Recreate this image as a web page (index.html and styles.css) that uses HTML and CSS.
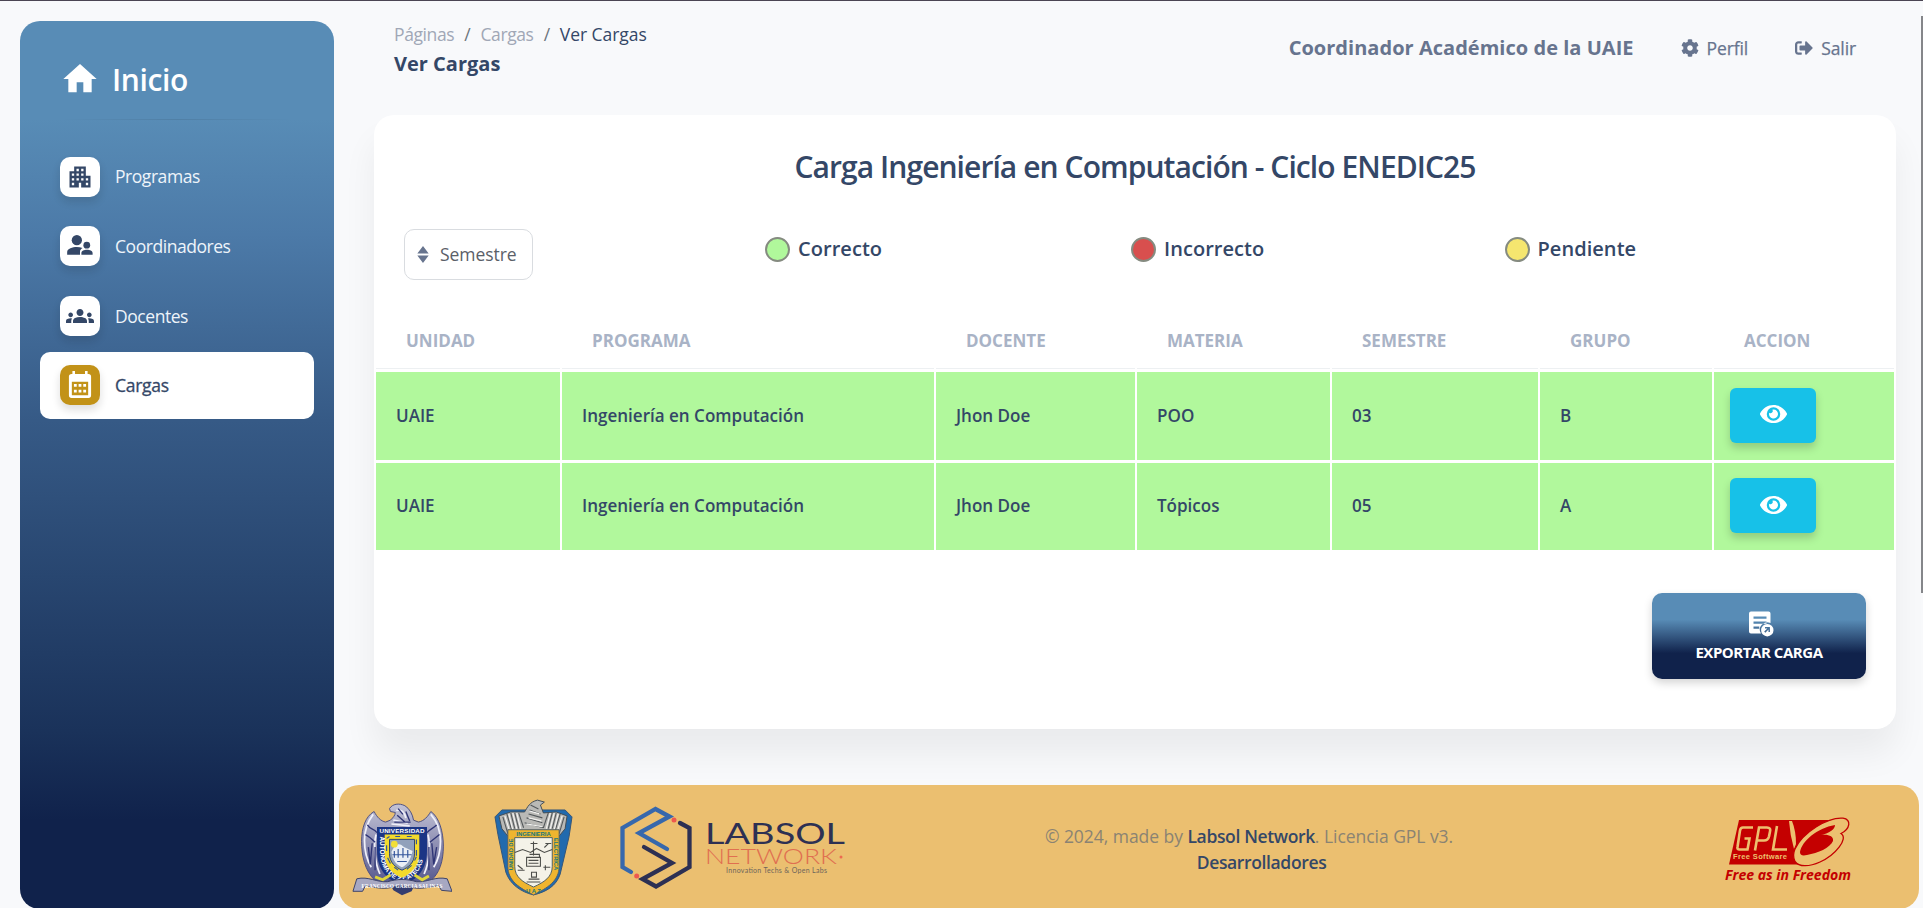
FILE: index.html
```html
<!DOCTYPE html>
<html lang="es">
<head>
<meta charset="utf-8">
<title>Ver Cargas</title>
<link rel="stylesheet" href="styles.css">
</head>
<body>
<div class="app">
  <aside class="sidebar">
    <a class="brand">
      <svg class="brand-icon" viewBox="0 0 24 24"><path d="M10 20v-6h4v6h5v-8h3L12 3 2 12h3v8z"/></svg>
      <span>Inicio</span>
    </a>
    <hr class="divider">
    <nav class="menu">
      <a class="item"><span class="tile"><svg viewBox="0 0 24 24"><path d="M17 11V3H7v4H3v14h8v-4h2v4h8V11h-4zM7 19H5v-2h2v2zm0-4H5v-2h2v2zm0-4H5V9h2v2zm4 4H9v-2h2v2zm0-4H9V9h2v2zm0-4H9V5h2v2zm4 8h-2v-2h2v2zm0-4h-2V9h2v2zm0-4h-2V5h2v2zm4 12h-2v-2h2v2zm0-4h-2v-2h2v2z"/></svg></span>Programas</a>
      <a class="item"><span class="tile"><svg viewBox="0 0 24 24"><circle cx="9.300" cy="7" r="4.400"/><circle cx="17.800" cy="11.300" r="2.900"/><path d="M1 19.500v-2.300c0-2.900 4.700-4.300 8.200-4.300 1.800 0 3.500.3 5 .9-1.500.8-2.200 1.900-2.200 3.100v2.600zM13.200 19.500v-1.400c0-2 2.400-2.800 4.800-2.800s4.800.8 4.800 2.800v1.400z"/></svg></span>Coordinadores</a>
      <a class="item"><span class="tile"><svg viewBox="0 0 24 24"><path d="M12 12.750c1.630 0 3.070.39 4.240.9 1.080.48 1.760 1.560 1.760 2.730V18H6v-1.610c0-1.180.68-2.260 1.760-2.730 1.170-.52 2.610-.91 4.240-.91zM4 13c1.100 0 2-.9 2-2s-.9-2-2-2-2 .9-2 2 .9 2 2 2zm1.130 1.100C4.760 14.040 4.390 14 4 14c-.99 0-1.930.21-2.780.58C.48 14.900 0 15.620 0 16.430V18h4.500v-1.610c0-.83.23-1.610.63-2.290zM20 13c1.100 0 2-.9 2-2s-.9-2-2-2-2 .9-2 2 .9 2 2 2zm4 3.430c0-.81-.48-1.530-1.220-1.850C21.930 14.210 20.990 14 20 14c-.39 0-.76.04-1.130.1.400.68.63 1.460.63 2.290V18H24v-1.570zM12 6c1.660 0 3 1.340 3 3s-1.340 3-3 3-3-1.340-3-3 1.340-3 3-3z"/></svg></span>Docentes</a>
      <a class="item active"><span class="tile"><svg viewBox="0 0 24 24"><path fill-rule="evenodd" d="M5.500 0h2.200v2.500h8.600V0h2.200v2.500h.7a2.300 2.300 0 0 1 2.300 2.300v16a2.300 2.300 0 0 1-2.300 2.300H4.800a2.300 2.300 0 0 1-2.300-2.300v-16a2.300 2.300 0 0 1 2.300-2.300h.7zM5 9.200V20.700h14V9.200z"/><path d="M6.800 11.200h2.400v2.400H6.800zm4 0h2.400v2.400h-2.400zm4 0h2.400v2.400h-2.400zM6.800 16h2.400v2.400H6.800zm4 0h2.400v2.400h-2.400zm4 0h2.400v2.400h-2.400z"/></svg></span>Cargas</a>
    </nav>
  </aside>

  <main class="main">
    <header class="topbar">
      <div>
        <div class="crumbs"><a>Páginas</a><i>/</i><a>Cargas</a><i>/</i><span>Ver Cargas</span></div>
        <h6 class="page-name">Ver Cargas</h6>
      </div>
      <div class="user">
        <b>Coordinador Académico de la UAIE</b>
        <a class="user-link"><svg viewBox="0 0 512 512"><path d="M487.400 315.700l-42.600-24.600c4.300-23.200 4.300-47 0-70.200l42.600-24.600c4.900-2.800 7.100-8.600 5.500-14-11.100-35.600-30-67.800-54.700-94.600-3.800-4.100-10-5.100-14.800-2.300L380.800 110c-17.900-15.400-38.500-27.300-60.800-35.100V25.800c0-5.600-3.900-10.500-9.400-11.700-36.700-8.200-74.300-7.800-109.200 0-5.500 1.200-9.400 6.100-9.400 11.700V75c-22.200 7.900-42.800 19.800-60.800 35.100L88.700 85.500c-4.900-2.800-11-1.900-14.800 2.300-24.700 26.700-43.600 58.900-54.700 94.600-1.700 5.400.6 11.200 5.500 14L67.300 221c-4.300 23.200-4.300 47 0 70.200l-42.600 24.600c-4.900 2.800-7.100 8.600-5.500 14 11.100 35.600 30 67.800 54.700 94.600 3.800 4.100 10 5.100 14.800 2.300l42.600-24.600c17.900 15.400 38.500 27.300 60.800 35.100v49.200c0 5.600 3.900 10.500 9.400 11.700 36.700 8.200 74.300 7.800 109.200 0 5.500-1.200 9.400-6.100 9.400-11.700v-49.200c22.200-7.900 42.800-19.800 60.800-35.100l42.600 24.600c4.900 2.800 11 1.900 14.800-2.300 24.700-26.700 43.600-58.900 54.700-94.600 1.500-5.500-.7-11.300-5.600-14.100zM256 336c-44.100 0-80-35.900-80-80s35.900-80 80-80 80 35.900 80 80-35.900 80-80 80z"/></svg>Perfil</a>
        <a class="user-link"><svg viewBox="0 0 512 512"><path d="M497 273L329 441c-15 15-41 4.500-41-17v-96H152c-13.300 0-24-10.700-24-24v-96c0-13.300 10.700-24 24-24h136V88c0-21.400 25.900-32 41-17l168 168c9.300 9.400 9.300 24.600 0 34zM192 436v-40c0-6.600-5.400-12-12-12H96c-17.700 0-32-14.300-32-32V160c0-17.700 14.300-32 32-32h84c6.600 0 12-5.400 12-12V76c0-6.600-5.400-12-12-12H96c-53 0-96 43-96 96v192c0 53 43 96 96 96h84c6.600 0 12-5.400 12-12z"/></svg>Salir</a>
      </div>
    </header>

    <section class="card">
      <h4 class="card-title">Carga Ingeniería en Computación - Ciclo ENEDIC25</h4>
      <div class="filters">
        <button class="sort"><svg viewBox="0 0 12 18"><path d="M6 0l6 8H0zM6 18L0 10h12z"/></svg>Semestre</button>
        <div class="legend"><span class="dot ok"></span>Correcto</div>
        <div class="legend"><span class="dot bad"></span>Incorrecto</div>
        <div class="legend"><span class="dot wait"></span>Pendiente</div>
      </div>
      <table class="grid">
        <colgroup><col class="c1"><col class="c2"><col class="c3"><col class="c4"><col class="c5"><col class="c6"><col class="c7"></colgroup>
        <thead><tr><th>Unidad</th><th>Programa</th><th>Docente</th><th>Materia</th><th>Semestre</th><th>Grupo</th><th>Accion</th></tr></thead>
        <tbody>
          <tr><td>UAIE</td><td>Ingeniería en Computación</td><td>Jhon Doe</td><td>POO</td><td>03</td><td>B</td><td class="act"><button class="view"><svg viewBox="0 0 576 512"><path d="M572.500 241.400C518.300 135.600 410.900 64 288 64S57.700 135.600 3.500 241.400a32.400 32.400 0 0 0 0 29.200C57.700 376.400 165.100 448 288 448s230.300-71.600 284.500-177.400a32.400 32.400 0 0 0 0-29.200zM288 400a144 144 0 1 1 144-144 143.900 143.900 0 0 1-144 144zm0-240a95.300 95.300 0 0 0-25.300 3.800 47.900 47.900 0 0 1-66.900 66.900A95.800 95.800 0 1 0 288 160z"/></svg></button></td></tr>
          <tr><td>UAIE</td><td>Ingeniería en Computación</td><td>Jhon Doe</td><td>Tópicos</td><td>05</td><td>A</td><td class="act"><button class="view"><svg viewBox="0 0 576 512"><path d="M572.500 241.400C518.300 135.600 410.900 64 288 64S57.700 135.600 3.500 241.400a32.400 32.400 0 0 0 0 29.200C57.700 376.400 165.100 448 288 448s230.300-71.600 284.500-177.400a32.400 32.400 0 0 0 0-29.200zM288 400a144 144 0 1 1 144-144 143.900 143.900 0 0 1-144 144zm0-240a95.300 95.300 0 0 0-25.300 3.800 47.900 47.900 0 0 1-66.900 66.900A95.800 95.800 0 1 0 288 160z"/></svg></button></td></tr>
        </tbody>
      </table>
      <button class="export">
        <svg viewBox="0 0 26 26"><path fill-rule="evenodd" d="M3 .5h17.500a2 2 0 0 1 2 2v9.600a7.300 7.300 0 0 0-9.500 10.400H3a2 2 0 0 1-2-2v-18a2 2 0 0 1 2-2zM5.500 5.500v2.200h13V5.500zm0 5v2.200h13v-2.200zm0 5v2.200h5.800v-2.200z"/><path fill-rule="evenodd" d="M19.300 13a6.200 6.200 0 1 1 0 12.400 6.200 6.200 0 0 1 0-12.400zm-2.300 3v1.400h2.400l-3.200 3.200 1.100 1.100 3.200-3.200v2.400h1.400V16z"/></svg>
        Exportar carga
      </button>
    </section>

    <footer class="footer">
      <svg class="crest-uaz" viewBox="0 0 104 96">
        <defs>
          <path id="uazName" d="M29.500 32v19c0 17 8 26 22.500 32 14-6 22.500-15 22.500-32V30"/>
          <linearGradient id="plume" x2="0" y2="1"><stop offset="0" stop-color="#c3c3d6"/><stop offset=".5" stop-color="#8a8bb0"/><stop offset="1" stop-color="#4a4c86"/></linearGradient>
        </defs>
        <path fill="url(#plume)" stroke="#4a4d80" d="M39 6c3-5 10-6 16-3 5 3 8 9 9 15l5 2c6-1 10-6 13-11 9 6 13 22 13 36 0 16-4 28-13 36L52 92 24 81C13 70 10 55 10 40c0-14 4-26 13-31 3 6 7 10 12 11l5-2c3-3 5-5 5-8l-5-1z"/>
        <path fill="none" stroke="#f0f0fa" stroke-width="1.800" d="M22 12c-6 8-9 17-9 27s2 20 7 28M25 33c-3 12-1 30 4 41M82 12c7 8 10 17 10 28s-2 19-7 27M79 33c3 12 1 30-4 41M46 8c5-2 9 2 10 8M43 18l15 3M41 22l19 2"/>
        <path fill="none" stroke="#2f3576" stroke-width="1.400" d="M16 23c3 5 6 3 10 8M14 33c4 2 7 5 10 8M21 42l-2 22M17 46l2 18M24 46v24M88 23c-4 4-7 4-10 8M91 33l-10 8M83 42l2 22M88 46l-3 18M80 46v24M48 6l5 6M47 13l8 7M56 9l4 10M44 20l17 0"/>
        <path fill="#1b3585" d="M26 25h52v25c0 19-10 30-26 36C36 80 26 69 26 50z"/>
        <path fill="#f3da2b" d="M34 33h36v20c0 14-8 21-18 25-10-4-18-11-18-25z"/>
        <path fill="#91a1bb" stroke="#2b4272" d="M39 38h26v15c0 9-6 14-13 17-7-3-13-8-13-17z"/>
        <path fill="#e9eef5" d="M41 51c5-10 9-9 13-5l9 4c-2 9-5 14-11 17-6-3-9-6-11-16z"/><circle cx="44" cy="43" r="3.500" fill="#f2df38"/>
        <path fill="none" stroke="#32549b" stroke-width="1.200" d="M42 54h20M44 50v7m4-9v9m5-10v10m5-8v8M47 61h10M36 37l3-2m6 0h5m7 0h5m5 3v5m0 6v6M36 44v6m1 7l3 6m4 4l4 3m9-1l5-4m3-5l2-4"/>
        <text x="52" y="31" textLength="47" class="crest-title">UNIVERSIDAD</text>
        <text class="crest-ring"><textPath href="#uazName" startOffset="3">AUTONOMA DE ZACATECAS</textPath></text>
        <path fill="#343d6f" d="M38 81h29l-5 11-10 4-9-5z"/>
        <path fill="#a7a8c2" stroke="#384067" d="M1 92l4-13c12-3 21 4 32 3 10-3 20-3 30 0 11 1 20-6 32-3l5 13-11-1-3-5c-11 2-19 4-28 2-8-2-13-2-21 0-9 2-18 0-27-2l-3 6z"/>
        <path fill="none" stroke="#ded53a" stroke-width="3" d="M24 77l8 3 8-5m25 0l8 5 7-4"/>
        <text x="52" y="88.500" textLength="84" class="crest-band">FRANCISCO GARCIA SALINAS</text>
      </svg>
      <svg class="crest-ie" viewBox="0 0 80 100">
        <path fill="#216aae" stroke="#355578" d="M1 19l7-7h64l7 7-3 20-9 38c-4 12-14 18-27 21C27 95 16 87 12 75L4 37z"/>
        <path fill="#b9b9b6" stroke="#444d54" d="M31 14c3-5 5-10 13-12l7 2-4 3 3 8 13-1 11 4-2 13-9 11-3-9H19l-2 9-9-11-3-13 12-4z"/>
        <path fill="none" stroke="#53585b" stroke-width="1.100" d="M9 19l5 17m-1-20l5 17m-1-18l4 16m0-16l4 16m0-16l5 15M71 19l-5 17m1-20l-5 17m1-18l-4 16m0-16l-4 16m0-16l-5 15M37 7l8 4m-9 1l11 4m-12 0l14 4m-16 0l16 5m-18 0l19 5"/>
        <path fill="none" stroke="#f2f2f0" stroke-width="1.200" d="M11 18l5 16m-1-18l4 16m0-17l4 16m0-16l4 16M69 18l-5 16m1-18l-4 16m0-17l-4 16m0-16l-4 16M36 13l10 3m-11 4l13 3m-15 3l16 3"/>
        <path fill="#efb52f" stroke="#526067" d="M14 32h52v37c0 15-12 22-26 29C26 91 14 84 14 69z"/>
        <path fill="#f4f2e8" stroke="#536160" d="M21 40h38v29c0 11-8 16-19 21-11-5-19-10-19-21z"/>
        <path fill="none" stroke="#4d4e4a" stroke-width="1.100" d="M21 55l8-3 8 3 6-4 8 4 8-3M40 44v14m-3-12h7M33 60h14v9H33zm3-3h10v3M35 63h10m-10 3h10M24 68l5 4m-5 1h7M50 70h7m-5-2v5M55 46l-4 4m1-4h6M38 75h5v5h-5zm-3 7h11m-13 3h14"/>
        <text x="40" y="38.500" class="ie-top">INGENIERIA</text>
        <text transform="translate(19.500 73) rotate(-90)" textLength="32" class="ie-side">UNIDAD DE</text>
        <text transform="translate(60.800 40) rotate(90)" textLength="33" class="ie-side">ELECTRICA</text>
        <text x="40" y="96" class="ie-bottom">U A Z</text>
      </svg>
      <svg class="labsol" viewBox="0 0 230 90">
        <g fill="none" stroke-width="4.300"><path stroke="#3768ac" stroke-linecap="round" d="M11 69L2.500 64V25L35.500 6l14 7.500L19 30l28 16"/><path stroke="#2d3053" stroke-linecap="round" d="M60 20l9.500 5v39L36 83.500 22.500 76 52 60 24 44"/></g>
        <circle cx="54" cy="17" r="2.500" fill="#ee584f"/><circle cx="16.700" cy="73" r="2.500" fill="#ee584f"/>
        <text x="85" y="40.500" textLength="140" lengthAdjust="spacingAndGlyphs" class="lab-name">LABSOL</text>
        <text x="85" y="61" textLength="132" lengthAdjust="spacingAndGlyphs" class="lab-net">NETWORK</text><circle cx="221" cy="54" r="1.500" fill="#ed6a50"/>
        <text x="106" y="69.500" textLength="101" class="lab-tag">Innovation Techs &amp; Open Labs</text>
      </svg>
      <p class="copy">© 2024, made by <b>Labsol Network</b>. Licencia GPL v3.<br><b class="devs">Desarrolladores</b></p>
      <svg class="gpl" viewBox="0 0 128 68">
        <path fill="#c40000" d="M14 4h96L86 48.500H4z"/>
        <g fill="none" stroke="#edc06f" stroke-width="2.600"><path d="M28 11.500H18q-2.500 0-3 3L12.500 31q-.5 2.500 2 2.500h8l2-11h-5M30 34.500l4-23h8q4 0 3 4l-1 5q-1 4-5 4h-7M52 10l-4 23.500h14"/></g>
        <path fill="#ecc070" d="M64 5q1 14 5 28l2-5Q71 15 67 5z"/>
        <path fill="#ecc070" stroke="#c40000" stroke-width="1.300" d="M70 33C78 16 103 1 118 2.200c9 1.200 7 11-2 15.300 8 5-6 22-21 28.500-11 5-21 5-25-.5-2-4-2-8 0-12.500z"/>
        <path fill="#c40000" d="M75 36C77 25 92 12 110 9c0 4-5 8-14 10 7-1 13 1 12 6-3 7-15 12-26 14-5 1-7 0-7-3z"/>
        <text x="8" y="43" textLength="54" class="gpl-small">Free Software</text>
        <text x="0" y="63.500" textLength="126" lengthAdjust="spacingAndGlyphs" class="gpl-motto">Free as in Freedom</text>
      </svg>
    </footer>
  </main>
  <span class="scrollbar"></span>
</div>
</body>
</html>
```

FILE: styles.css
```css
* { box-sizing: border-box; }
html, body { height: 100%; }
body { margin: 0; overflow: hidden; background: #f8f9fb; color: #344767; font: 400 17.5px/1.5 "Open Sans", "Noto Sans", sans-serif; }
button { font: inherit; border: 0; }
svg { display: block; fill: currentColor; flex: none; }
.app { position: relative; display: flex; height: 908px; overflow: hidden; border-top: 1px solid #4b4553; }
.sidebar { width: 314px; height: 888px; margin: 20px 0 0 20px; flex: none; border-radius: 20px; background: linear-gradient(180deg, #588cb6 0, #588cb6 11%, #4c7aa8 24%, #365a86 45%, #1a325a 80%, #10224b 90%); padding: 0 20px; color: #fff; }
.brand { display: flex; align-items: center; height: 98px; padding: 19px 0 0 20px; gap: 12px; font-size: 30px; font-weight: 600; letter-spacing: -.35px; }
.brand span { margin-top: -1px; }
.brand-icon { width: 40px; height: 40px; margin-top: -2px; }
.divider { height: 1px; border: 0; margin: 0 20px; background: linear-gradient(90deg, transparent, rgba(0,0,0,.09), transparent); }
.menu { display: flex; flex-direction: column; padding-top: 23px; gap: 2.600px; }
.item { display: flex; align-items: center; height: 67px; padding-left: 20px; gap: 15px; color: #eef4fa; font-size: 17.500px; letter-spacing: -.45px; border-radius: 10px; }
.tile { width: 40px; height: 40px; border-radius: 10px; display: grid; place-items: center; background: #fff; color: #344767; box-shadow: 0 5px 8px rgba(20,20,20,.14); }
.tile svg { width: 28px; height: 28px; }
.active { background: #fff; color: #344767; -webkit-text-stroke: .3px currentColor; letter-spacing: -.3px; }
.active .tile { background: #c29218; color: #fff; }
.main { flex: 1; min-width: 0; display: flex; flex-direction: column; }
.topbar { display: flex; flex: none; justify-content: space-between; height: 114px; padding: 19px 67px 0 60px; }
.crumbs { display: flex; line-height: 28px; color: #a0a7b6; font-size: 17.500px; letter-spacing: -.4px; }
.crumbs i { width: 26.300px; text-align: center; font-style: normal; color: #6c757d; }
.crumbs span { color: #344767; letter-spacing: -.05px; }
.page-name { margin: 2px 0 0; font-size: 20px; line-height: 28px; letter-spacing: 0; }
.user { display: flex; align-items: center; height: 56px; color: #67748e; }
.user b { font-size: 20px; letter-spacing: .03px; }
.user-link { display: flex; align-items: center; gap: 8px; margin-left: 47px; font-size: 17.500px; letter-spacing: -.1px; -webkit-text-stroke: .25px currentColor; }
.user-link svg { width: 18px; height: 18px; }
.card { width: 1522px; height: 614px; margin-left: 40px; flex: none; border-radius: 20px; background: #fff; box-shadow: 0 25px 34px rgba(0,0,0,.06); display: flex; flex-direction: column; }
.card-title { margin: 0; padding-top: 31px; height: 113px; text-align: center; font-size: 30px; line-height: 42px; font-weight: 600; letter-spacing: -.93px; }
.filters { display: grid; grid-template-columns: 361px 366px 373.500px 1fr; padding-left: 30px; height: 88px; align-items: start; }
.sort { display: flex; align-items: center; width: 129px; height: 51px; margin-top: 1px; padding: 0 0 0 12px; gap: 11px; border: 1px solid #d9dce0; border-radius: 10px; background: #fff; color: #5a6068; letter-spacing: -.05px; }
.sort svg { width: 12px; height: 17px; color: #67748e; }
.legend { display: flex; align-items: center; gap: 8px; height: 42px; font-size: 20px; font-weight: 600; letter-spacing: .05px; }
.dot { width: 25px; height: 25px; border: 2px solid #858b80; border-radius: 50%; }
.ok { background: #b0f89b; }
.bad { background: #d84f4e; }
.wait { background: #f5e66f; }
.grid { width: 1522px; table-layout: fixed; border-collapse: separate; border-spacing: 2px 3px; font-size: 17.500px; }
.c1 { width: 184px; } .c2 { width: 372px; } .c3 { width: 199px; } .c4 { width: 193px; } .c5 { width: 206px; } .c6 { width: 172px; }
th { height: 50px; padding: 0 0 6px 30px; text-align: left; border-bottom: 1px solid #edf0f2; color: #a9b3c6; font-size: 17px; text-transform: uppercase; }
td { height: 87.500px; padding: 0 0 0 20px; background: #b1f89c; font-size: 17.050px; font-weight: 600; }
.act { padding: 0 0 0 16px; }
.view { display: grid; place-items: center; width: 86px; height: 55px; margin-top: -1px; border-radius: 6px; background: #17c1e8; color: #fff; box-shadow: 0 5px 8px rgba(0,0,0,.18); }
.view svg { width: 27px; height: 24px; margin-top: -2px; }
.export { display: flex; flex-direction: column; align-items: center; align-self: flex-end; width: 214px; height: 86px; margin: 40px 30px 0 0; padding: 18px 0 0; gap: 4px; border-radius: 10px; background: linear-gradient(#588cb6 31%, #10224b 70%); color: #fff; text-transform: uppercase; font-size: 15px; line-height: 22px; font-weight: 700; letter-spacing: -.45px; box-shadow: 0 4px 8px rgba(0,0,0,.17); }
.export svg { width: 26px; height: 26px; margin-left: 3px; }
.footer { display: flex; height: 124px; width: 1580px; flex: none; margin: 56px 0 0 5px; padding: 14px 0 0 13px; border-radius: 20px; background: #ebbf70; }
.crest-uaz { width: 100px; height: 94px; margin-top: 3px; }
.crest-ie { width: 79px; height: 99px; margin-left: 42px; margin-top: -1px; }
.labsol { width: 230px; height: 90px; margin: 4px 0 0 47px; }
.crest-title { fill: #fff; font: 700 6.500px "Liberation Sans", sans-serif; text-anchor: middle; }
.crest-ring { fill: #fff; font: 700 6.600px "Liberation Sans", sans-serif; }
.crest-band { fill: #fff; font: 700 5.500px "Liberation Serif", serif; text-anchor: middle; }
.ie-top, .ie-side, .ie-bottom { fill: #17777c; font: 700 6px "Liberation Sans", sans-serif; }
.ie-top, .ie-bottom { text-anchor: middle; }
.lab-name { fill: #2d3053; font: 400 28px Lato, sans-serif; }
.lab-net { fill: #e06f50; font: 300 21px Lato, sans-serif; }
.lab-tag { fill: #6d655b; font: 400 7px Lato, sans-serif; }
.copy { width: 470px; margin: 24px 0 0 164px; text-align: center; font-size: 17.500px; line-height: 26px; letter-spacing: -.04px; color: #8a8373; }
.copy b { font-weight: 600; color: #344767; letter-spacing: -.36px; }
.copy .devs { padding-left: 25px; }
.gpl { width: 128px; height: 68px; margin: 17px 66px 0 auto; }
.gpl-small { fill: #edc06f; font: 700 7.500px "Liberation Sans", sans-serif; }
.gpl-motto { fill: #c40000; font: italic 700 14px "Open Sans", sans-serif; }
.scrollbar { position: absolute; right: 0; top: 15px; width: 2px; height: 577px; background: #85868a; }
```
